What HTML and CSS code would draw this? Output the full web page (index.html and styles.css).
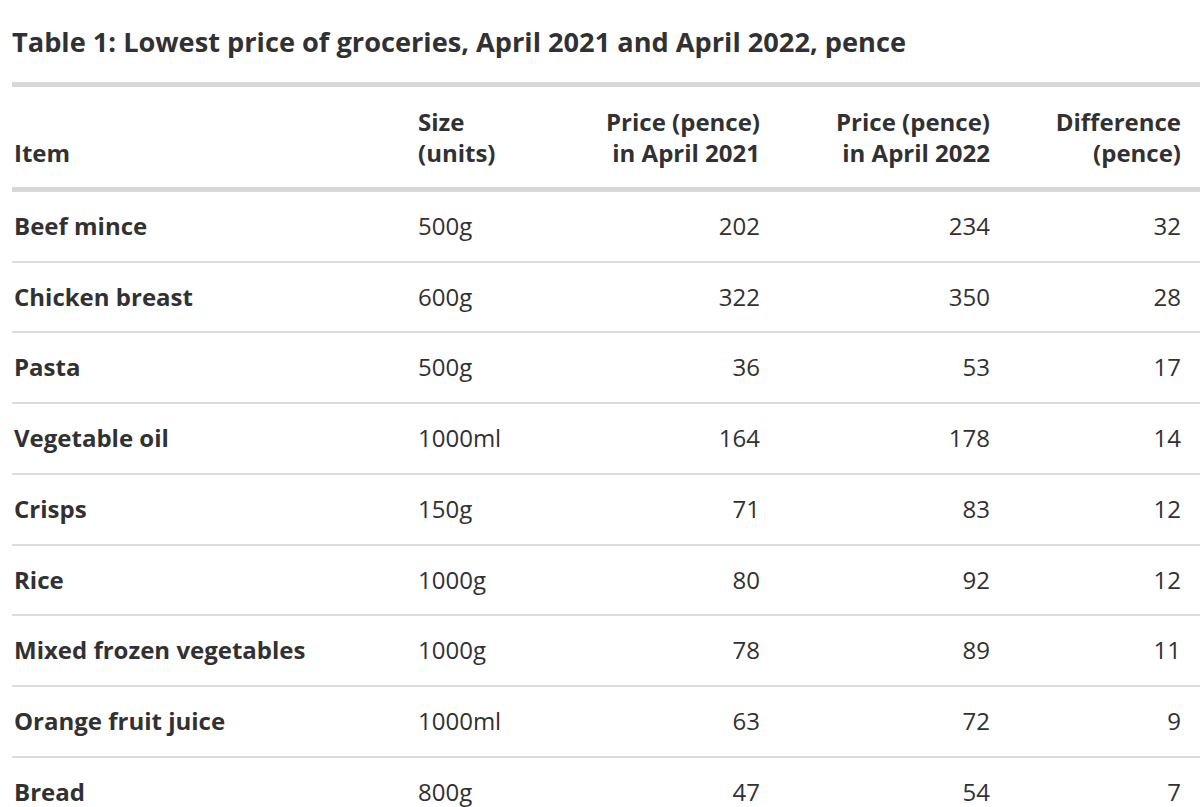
FILE: index.html
```html
<!DOCTYPE html>
<html lang="en">
<head>
<meta charset="utf-8">
<title>Lowest price of groceries</title>
<link rel="stylesheet" href="styles.css">
</head>
<body>
<div class="page">
  <h2 class="title">Table 1: Lowest price of groceries, April 2021 and April 2022, pence</h2>
  <table class="data">
    <colgroup>
      <col class="c-item">
      <col class="c-size">
      <col class="c-p21">
      <col class="c-p22">
      <col class="c-diff">
    </colgroup>
    <thead>
      <tr>
        <th class="left">Item</th>
        <th class="left">Size<br>(units)</th>
        <th class="num">Price (pence)<br>in April 2021</th>
        <th class="num">Price (pence)<br>in April 2022</th>
        <th class="num last">Difference<br>(pence)</th>
      </tr>
    </thead>
    <tbody>
      <tr><th class="left">Beef mince</th><td>500g</td><td class="num">202</td><td class="num">234</td><td class="num last">32</td></tr>
      <tr><th class="left">Chicken breast</th><td>600g</td><td class="num">322</td><td class="num">350</td><td class="num last">28</td></tr>
      <tr><th class="left">Pasta</th><td>500g</td><td class="num">36</td><td class="num">53</td><td class="num last">17</td></tr>
      <tr><th class="left">Vegetable oil</th><td>1000ml</td><td class="num">164</td><td class="num">178</td><td class="num last">14</td></tr>
      <tr><th class="left">Crisps</th><td>150g</td><td class="num">71</td><td class="num">83</td><td class="num last">12</td></tr>
      <tr><th class="left">Rice</th><td>1000g</td><td class="num">80</td><td class="num">92</td><td class="num last">12</td></tr>
      <tr><th class="left">Mixed frozen vegetables</th><td>1000g</td><td class="num">78</td><td class="num">89</td><td class="num last">11</td></tr>
      <tr><th class="left">Orange fruit juice</th><td>1000ml</td><td class="num">63</td><td class="num">72</td><td class="num last">9</td></tr>
      <tr><th class="left">Bread</th><td>800g</td><td class="num">47</td><td class="num">54</td><td class="num last">7</td></tr>
    </tbody>
  </table>
</div>
</body>
</html>
```

FILE: styles.css
```css
html, body {
  margin: 0;
  padding: 0;
  background: #ffffff;
}

body {
  font-family: "Open Sans", "Liberation Sans", sans-serif;
  color: #323132;
  overflow: hidden;
}

.page {
  padding: 24px 0 0 12px;
}

.title {
  margin: 0 0 23px 0;
  font-size: 27.2px;
  line-height: 35px;
  font-weight: 700;
  color: #323132;
  white-space: nowrap;
}

.data {
  width: 1188px;
  table-layout: fixed;
  border-collapse: separate;
  border-spacing: 0;
  border-top: 5px solid #d8d8d8;
  font-size: 24px;
  line-height: 31px;
}

.c-item { width: 404px; }
.c-size { width: 185px; }
.c-p21 { width: 161px; }
.c-p22 { width: 230px; }
.c-diff { width: 208px; }

.data th,
.data td {
  padding: 19px 2px;
  vertical-align: bottom;
  text-align: left;
  white-space: nowrap;
}

.data thead th {
  font-weight: 700;
  border-bottom: 5px solid #d8d8d8;
}

.data tbody th {
  font-weight: 700;
}

.data tbody td {
  font-weight: 400;
  line-height: 30.7px;
}

.data tbody th {
  line-height: 30.7px;
}

.data tbody th,
.data tbody td {
  border-bottom: 2px solid #dcdcdc;
}

.data .num {
  text-align: right;
}

.data .last {
  padding-right: 19px;
}
```
